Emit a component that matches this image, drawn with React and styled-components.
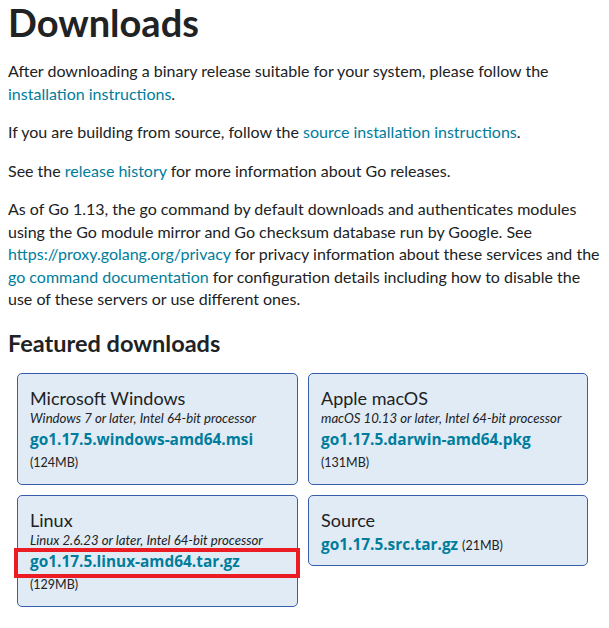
import React from "react";
import styled, { createGlobalStyle } from "styled-components";

const Global = createGlobalStyle`
  body {
    margin: 0;
    background: #fff;
    font-family: Lato, "Open Sans", sans-serif;
    color: #202224;
  }
`;

const Page = styled.main`
  padding: 0 8px;
`;

const Title = styled.h1`
  font-size: 38px;
  font-weight: 700;
  margin: 0 0 16px;
  line-height: 44px;
`;

const Para = styled.p`
  font-size: 16px;
  line-height: 22.5px;
  margin: 0 0 16px;
`;

const Link = styled.a`
  color: #007d9c;
  text-decoration: none;
`;

const Heading = styled.h2`
  font-size: 23.5px;
  line-height: 28px;
  font-weight: 700;
  margin: 18px 0 16px;
`;

const Grid = styled.div`
  display: grid;
  grid-template-columns: 281px 280px;
  gap: 10px;
  padding-left: 9px;
  align-items: start;
`;

const Card = styled.div`
  background: #e0ebf5;
  border: 1px solid #375eab;
  border-radius: 5px;
  padding: 13px 12px 10px;
  height: ${(p) => (p.$short ? "71px" : "112px")};
  box-sizing: border-box;
`;

const Platform = styled.div`
  font-size: 18px;
  line-height: 22px;
`;

const Reqs = styled.div`
  font-size: 13.2px;
  font-style: italic;
  line-height: 19px;
`;

const File = styled.div`
  position: relative;
  margin-top: ${(p) => p.$offset || 0}px;
  font-family: "Open Sans", Lato, sans-serif;
  font-size: 15.4px;
  font-weight: 700;
  color: #007d9c;
  line-height: 24px;
  white-space: nowrap;
`;

const Size = styled.span`
  font-family: Lato, sans-serif;
  font-size: 12.5px;
  font-weight: 400;
  color: #202224;
  display: ${(p) => (p.$inline ? "inline" : "block")};
  line-height: 22px;
`;

const Mark = styled.span`
  position: absolute;
  left: -16px;
  top: -2px;
  width: 286px;
  height: 30px;
  border: 4px solid #ec1c24;
  box-sizing: border-box;
`;

const downloads = [
  { name: "Microsoft Windows", reqs: "Windows 7 or later, Intel 64-bit processor", file: "go1.17.5.windows-amd64.msi", size: "(124MB)" },
  { name: "Apple macOS", reqs: "macOS 10.13 or later, Intel 64-bit processor", file: "go1.17.5.darwin-amd64.pkg", size: "(131MB)" },
  { name: "Linux", reqs: "Linux 2.6.23 or later, Intel 64-bit processor", file: "go1.17.5.linux-amd64.tar.gz", size: "(129MB)", marked: true },
];

export default function App() {
  return (
    <Page>
      <Global />
      <Title>Downloads</Title>
      <Para>
        After downloading a binary release suitable for your system, please follow the{" "}
        <Link href="#">installation instructions</Link>.
      </Para>
      <Para>
        If you are building from source, follow the <Link href="#">source installation instructions</Link>.
      </Para>
      <Para>
        See the <Link href="#">release history</Link> for more information about Go releases.
      </Para>
      <Para>
        As of Go 1.13, the go command by default downloads and authenticates modules using the Go module
        mirror and Go checksum database run by Google. See{" "}
        <Link href="#">https://proxy.golang.org/privacy</Link> for privacy information about these services
        and the <Link href="#">go command documentation</Link> for configuration details including how to
        disable the use of these servers or use different ones.
      </Para>
      <Heading>Featured downloads</Heading>
      <Grid>
        {downloads.map((d) => (
          <Card key={d.name}>
            <Platform>{d.name}</Platform>
            <Reqs>{d.reqs}</Reqs>
            <File>
              {d.marked && <Mark />}
              {d.file}
            </File>
            <Size>{d.size}</Size>
          </Card>
        ))}
        <Card $short>
          <Platform>Source</Platform>
          <File $offset={2}>
            go1.17.5.src.tar.gz <Size $inline>(21MB)</Size>
          </File>
        </Card>
      </Grid>
    </Page>
  );
}
